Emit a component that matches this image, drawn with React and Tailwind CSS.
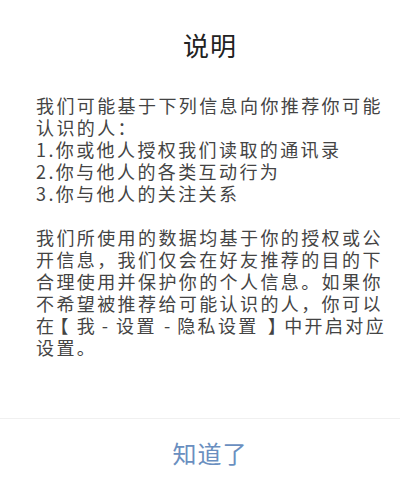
import React from 'react';

const intro = [
  '我们可能基于下列信息向你推荐你可能',
  '认识的人：',
  '1.你或他人授权我们读取的通讯录',
  '2.你与他人的各类互动行为',
  '3.你与他人的关注关系',
];

const detail = [
  '我们所使用的数据均基于你的授权或公',
  '开信息，我们仅会在好友推荐的目的下',
  '合理使用并保护你的个人信息。如果你',
  '不希望被推荐给可能认识的人，你可以',
];

const App = () => {
  return (
    <div
      className="w-[400px] h-[486px] bg-white flex flex-col overflow-hidden"
      style={{ fontFamily: '"Noto Sans CJK SC", "Noto Sans", sans-serif' }}
    >
      {/* Title */}
      <div className="pl-[20px] pt-[28px] h-[94px]">
        <h1 className="text-center text-[26px] leading-[34px] text-[#222] font-normal tracking-[1px]">
          说明
        </h1>
      </div>

      {/* Body */}
      <div className="flex-1 pl-[36px] text-[18px] leading-[22px] tracking-[2.4px] text-[#444] whitespace-nowrap">
        {intro.map((line) => (
          <div key={line}>{line}</div>
        ))}
        <div className="h-[22px]"></div>
        {detail.map((line) => (
          <div key={line}>{line}</div>
        ))}
        <div className="flex items-baseline">
          <span>在</span>
          <span className="ml-[-6px] mr-[6px]">【</span>
          <span className="tracking-normal mr-[7px]">我</span>
          <span className="tracking-normal">-</span>
          <span className="ml-[8px] mr-[7px]">设置</span>
          <span className="tracking-normal">-</span>
          <span className="ml-[7px] mr-[5px]">隐私设置</span>
          <span className="ml-[4px] mr-[-4px]">】</span>
          <span>中开启对应</span>
        </div>
        <div>设置。</div>
      </div>

      {/* Footer button */}
      <div className="border-t border-[#f0f0f0] h-[68px] pl-[20px] flex items-center justify-center">
        <span className="text-[24px] leading-none text-[#6a8fc0] tracking-[1px]">知道了</span>
      </div>
    </div>
  );
};

export default App;
